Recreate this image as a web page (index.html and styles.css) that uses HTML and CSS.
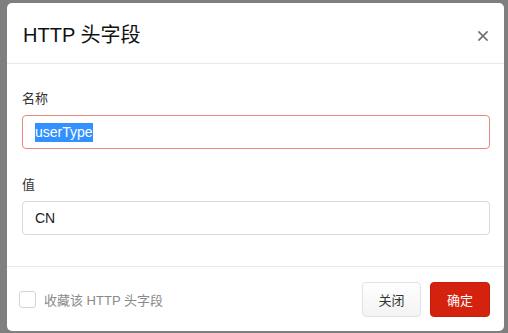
FILE: index.html
```html
<!DOCTYPE html>
<html lang="zh-CN">
<head>
  <meta charset="UTF-8" />
  <title>HTTP 头字段</title>
  <link rel="stylesheet" href="styles.css">
</head>
<body>
  <div class="modal">
    <div class="modal-header">
      <h4 class="modal-title">HTTP 头字段</h4>
      <span class="close">
        <svg width="10" height="10" viewBox="0 0 10 10"><path d="M1 1L9 9M9 1L1 9" stroke="#6f6f6f" stroke-width="1.7" stroke-linecap="square"/></svg>
      </span>
    </div>
    <div class="modal-body">
      <div class="form-group">
        <label class="label">名称</label>
        <div class="field field-error"><span class="selected">userType</span></div>
      </div>
      <div class="form-group">
        <label class="label">值</label>
        <div class="field">CN</div>
      </div>
    </div>
    <div class="modal-footer">
      <label class="fav"><span class="checkbox"></span>收藏该 HTTP 头字段</label>
      <div class="actions">
        <button class="btn btn-default">关闭</button>
        <button class="btn btn-primary">确定</button>
      </div>
    </div>
  </div>
</body>
</html>
```

FILE: styles.css
```css
body { margin: 0; background: #7f7f7f; font-family: 'Liberation Sans', 'Noto Sans CJK SC', sans-serif; color: #333; height: 333px; overflow: hidden; }
.modal { margin: 3px 0 0 7px; width: 497px; height: 328px; background: #fff; border-radius: 5px; display: flex; flex-direction: column; }
.modal-header { display: flex; align-items: center; justify-content: space-between; padding: 21px 16px 17px 16px; border-bottom: 1px solid #e8e8e8; }
.modal-title { margin: 0; font-size: 20px; font-weight: normal; line-height: 22px; color: #111; }
.close { display: flex; width: 10px; height: 10px; margin-top: 2px; }
.modal-body { padding: 25px 14px 16px 15px; }
.form-group { display: flex; flex-direction: column; margin-bottom: 26px; }
.form-group:last-child { margin-bottom: 15px; }
.label { font-size: 13px; line-height: 20px; margin-bottom: 6px; color: #333; }
.field { height: 32px; border: 1px solid #d9d9d9; border-radius: 4px; padding: 0 12px; font-size: 14px; line-height: 32px; color: #222; }
.field-error { border-color: #e8877c; }
.selected { background: #3390ff; color: #fff; padding: 1px 0 2px; }
.modal-footer { flex: 1; display: flex; align-items: center; justify-content: space-between; border-top: 1px solid #e8e8e8; padding: 0 14px 0 12px; }
.fav { display: flex; align-items: center; gap: 8px; font-size: 13px; color: #8a8a8a; }
.checkbox { width: 15px; height: 15px; border: 1px solid #d4d4d4; border-radius: 3px; background: #fff; }
.actions { display: flex; gap: 9px; }
.btn { height: 35px; width: 60px; border-radius: 4px; font-family: inherit; font-size: 13px; padding: 0; }
.btn-default { background: linear-gradient(#fff, #f3f3f3); border: 1px solid #e2e2e2; color: #333; width: 59px; }
.btn-primary { background: #d4220f; border: 1px solid #c51e0c; color: #fff; }
```
